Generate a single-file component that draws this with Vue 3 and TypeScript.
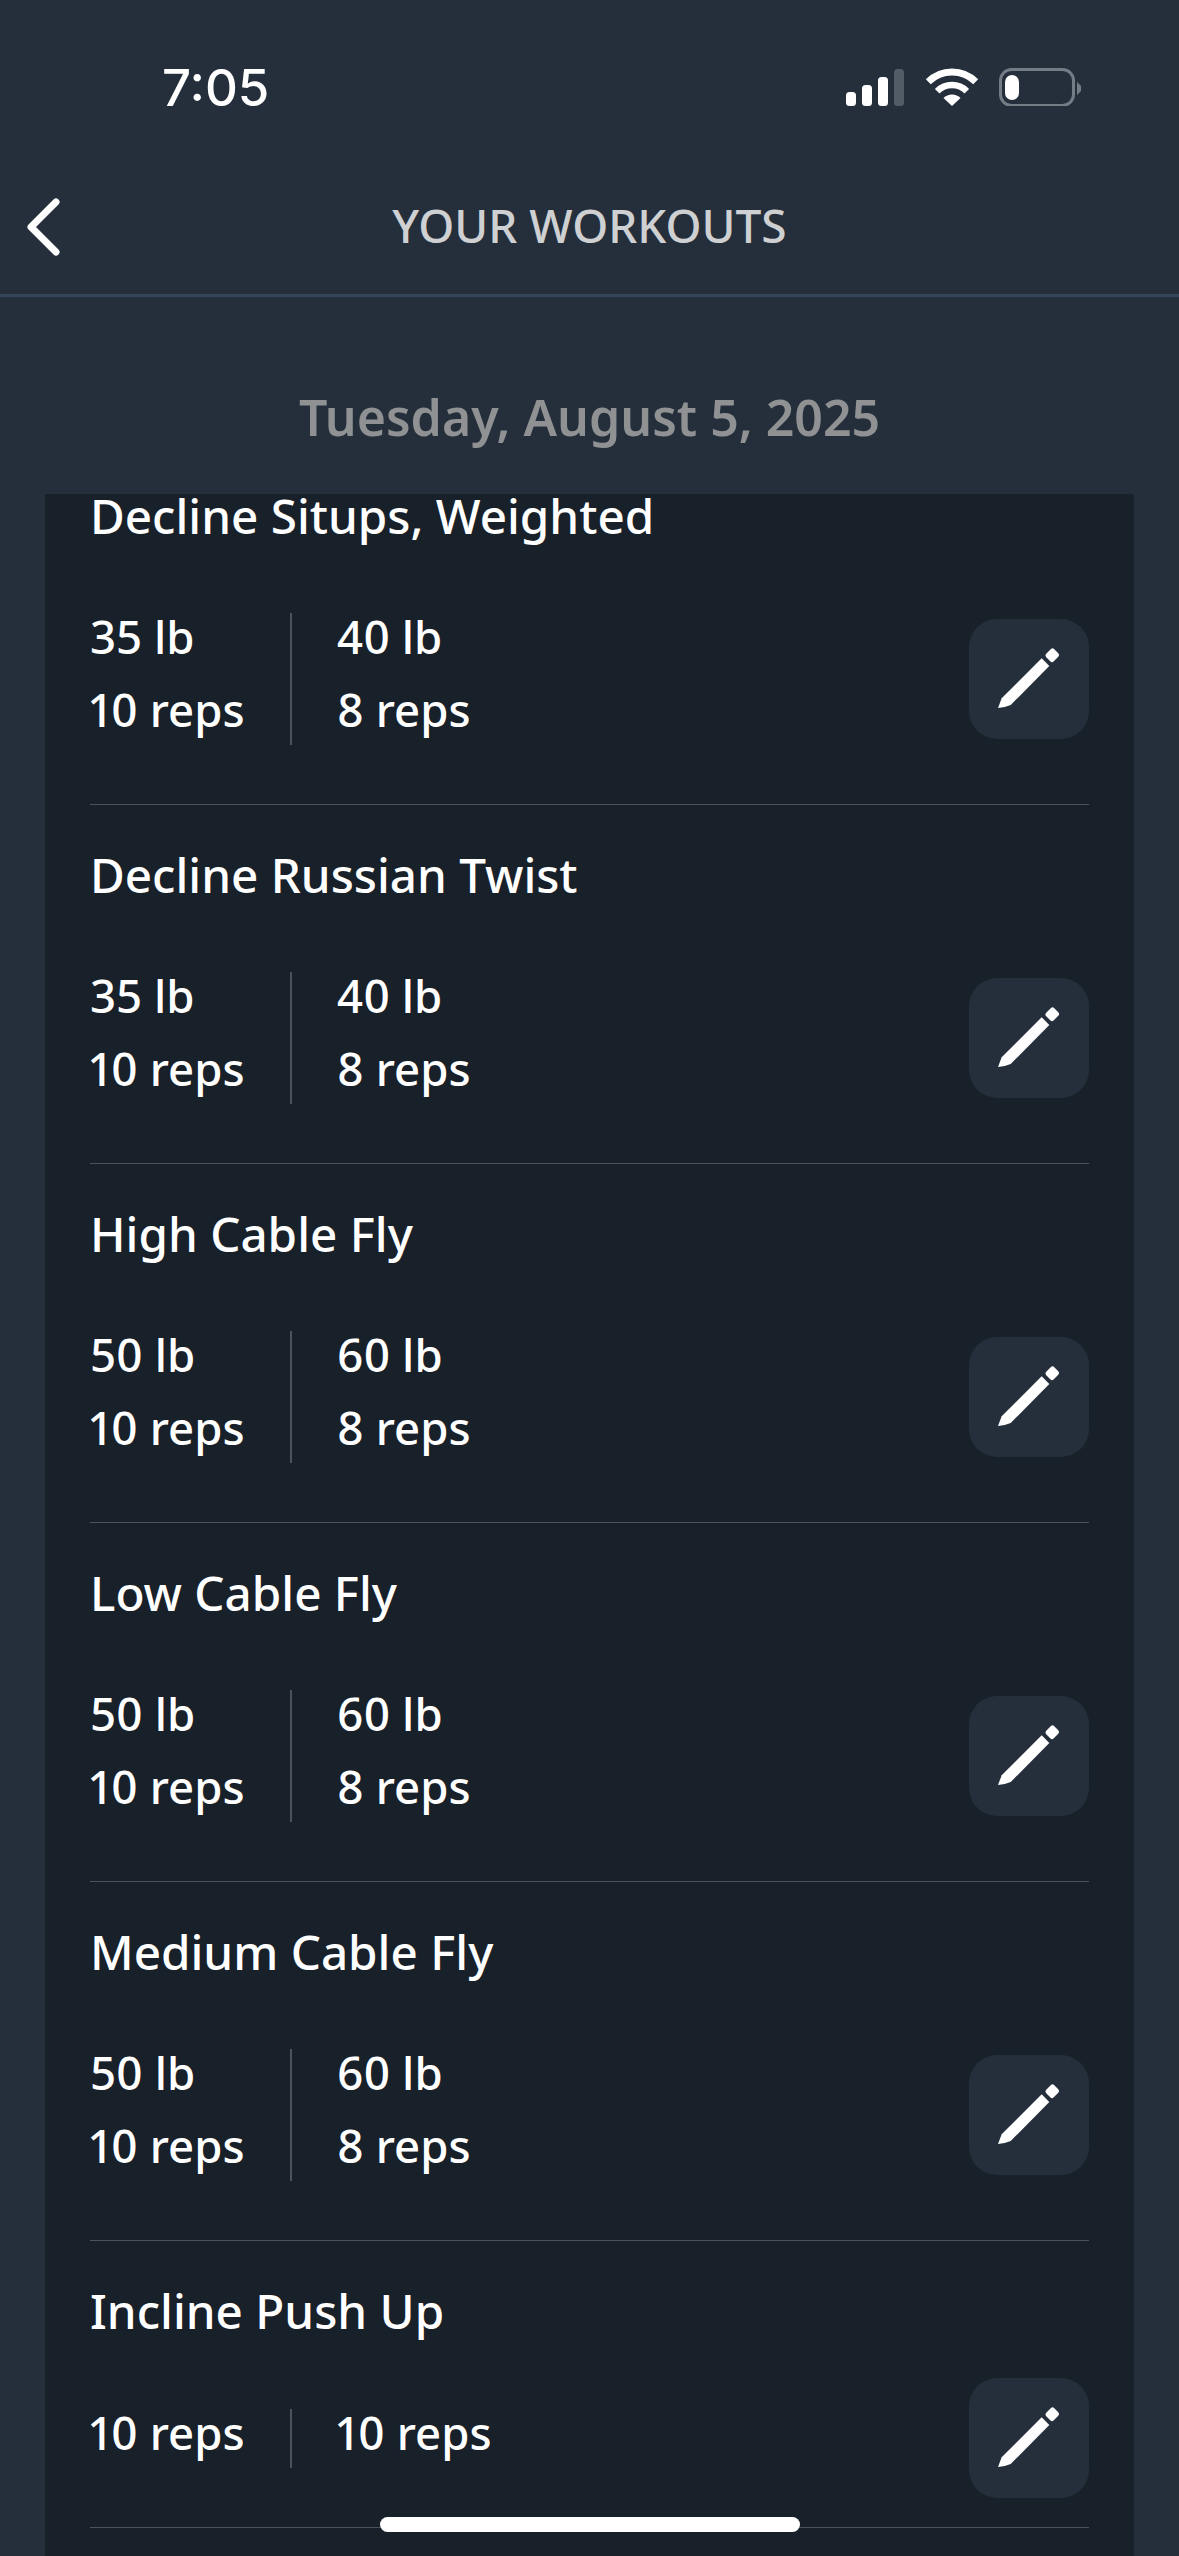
<script setup lang="ts">
interface SetData { lines: string[] }
interface Workout { name: string; sets: SetData[] }

const workouts: Workout[] = [
  { name: 'Decline Situps, Weighted', sets: [{ lines: ['35 lb', '10 reps'] }, { lines: ['40 lb', '8 reps'] }] },
  { name: 'Decline Russian Twist', sets: [{ lines: ['35 lb', '10 reps'] }, { lines: ['40 lb', '8 reps'] }] },
  { name: 'High Cable Fly', sets: [{ lines: ['50 lb', '10 reps'] }, { lines: ['60 lb', '8 reps'] }] },
  { name: 'Low Cable Fly', sets: [{ lines: ['50 lb', '10 reps'] }, { lines: ['60 lb', '8 reps'] }] },
  { name: 'Medium Cable Fly', sets: [{ lines: ['50 lb', '10 reps'] }, { lines: ['60 lb', '8 reps'] }] },
  { name: 'Incline Push Up', sets: [{ lines: ['10 reps'] }, { lines: ['10 reps'] }] },
]
</script>

<template>
  <div class="page">
    <header class="status">
      <span class="time">7:05</span>
      <svg class="indicators" width="235" height="38" viewBox="846 68 235 38" aria-hidden="true">
        <rect x="846" y="92" width="10" height="14" rx="3.5" fill="#fff" />
        <rect x="862" y="85" width="10" height="21" rx="3.5" fill="#fff" />
        <rect x="878" y="77" width="10" height="29" rx="3.5" fill="#fff" />
        <rect x="894" y="69" width="10" height="37" rx="3.5" fill="#525c66" />
        <path d="M928.3 81.7 A33.5 33.5 0 0 1 975.7 81.7" fill="none" stroke="#fff" stroke-width="7" />
        <path d="M937.2 91.2 A21 21 0 0 1 966.8 91.2" fill="none" stroke="#fff" stroke-width="6.5" />
        <path d="M952 106 L943.5 98 A12 12 0 0 1 960.5 98 Z" fill="#fff" />
        <rect x="1000.5" y="69.5" width="73" height="36" rx="11" fill="none" stroke="#747c86" stroke-width="3" />
        <rect x="1005" y="75" width="14" height="25" rx="7" fill="#fff" />
        <path d="M1077 82 L1081 86 Q1081.5 88.5 1081 91 L1077 95 Z" fill="#747c86" />
      </svg>
    </header>

    <nav class="nav">
      <svg class="back" width="36" height="60" viewBox="0 0 36 60" aria-hidden="true">
        <path d="M31 5 L6 30 L31 55" fill="none" stroke="#fff" stroke-width="7" stroke-linecap="round" stroke-linejoin="round" />
      </svg>
      <h1 class="nav-title">YOUR WORKOUTS</h1>
    </nav>

    <h2 class="date">Tuesday, August 5, 2025</h2>

    <main class="card">
      <section v-for="w in workouts" :key="w.name" class="row">
        <h3 class="name">{{ w.name }}</h3>
        <div class="body">
          <div class="sets">
            <div v-for="(s, i) in w.sets" :key="i" class="set">
              <div v-for="l in s.lines" :key="l" class="line">{{ l }}</div>
            </div>
          </div>
          <button class="edit" type="button" aria-label="Edit">
            <svg width="120" height="120" viewBox="0 0 120 120" aria-hidden="true">
              <path d="M29 89 L32.7 79.3 L72.7 39.3 L80.3 47 L41.7 86 Q36 88.5 29 89 Z" fill="#fff" />
              <path d="M79 36.5 L83.5 32 L87.5 36 L83 40.5 Z" fill="#fff" stroke="#fff" stroke-width="5" stroke-linejoin="round" />
            </svg>
          </button>
        </div>
      </section>
    </main>

    <div class="home-indicator"></div>
  </div>
</template>

<style>
html, body { margin: 0; background: #252f3b; }
</style>

<style scoped>
.page {
  position: relative;
  width: 1179px;
  height: 2556px;
  overflow: hidden;
  display: flex;
  flex-direction: column;
  background: #252f3b;
  color: #fff;
  font-family: "Noto Sans", "Open Sans", sans-serif;
}
.status {
  height: 176px;
  flex: none;
  box-sizing: border-box;
  padding: 0 98px 0 162px;
  display: flex;
  align-items: center;
  justify-content: space-between;
}
.indicators {
  margin-bottom: 2px;
}
.time {
  font-family: Inter, Roboto, sans-serif;
  font-size: 51px;
  font-weight: 500;
  line-height: 60px;
}
.nav {
  height: 118px;
  flex: none;
  border-bottom: 3px solid #36465a;
  display: grid;
  grid-template-columns: 1fr auto 1fr;
  align-items: start;
}
.back {
  margin: 21px 0 0 25px;
}
.nav-title {
  margin: 19px 0 0;
  font-size: 46px;
  font-weight: 500;
  line-height: 60px;
  color: #cfd0d2;
}
.date {
  flex: none;
  margin: 0;
  padding: 87px 0 44px;
  font-size: 50px;
  font-weight: 600;
  line-height: 66px;
  text-align: center;
  color: #8f9193;
}
.card {
  flex: 1;
  min-height: 0;
  margin: 0 45px;
  padding: 0 45px;
  overflow: hidden;
  background: #18202a;
}
.row {
  padding: 40px 0 29px;
  border-bottom: 1px solid #4c5259;
}
.row:first-child {
  margin-top: -48px;
}
.name {
  margin: 0;
  font-size: 47.6px;
  font-weight: 500;
  line-height: 60px;
}
.body {
  margin-top: 37px;
  display: flex;
  align-items: center;
  justify-content: space-between;
}
.sets {
  display: flex;
  padding: 30px 0;
}
.set {
  min-width: 200px;
  box-sizing: border-box;
  display: flex;
  flex-direction: column;
  gap: 14px;
}
.set + .set {
  border-left: 2px solid #4c5259;
  padding-left: 45px;
}
.line {
  font-size: 45.5px;
  font-weight: 500;
  line-height: 59px;
  font-variant-numeric: proportional-nums;
  margin: -6px 0 6px;
}
.edit {
  flex: none;
  width: 120px;
  height: 120px;
  padding: 0;
  border: 0;
  border-radius: 28px;
  background: #252f3b;
  display: block;
}
.edit svg {
  display: block;
}
.home-indicator {
  position: absolute;
  left: 380px;
  top: 2517px;
  width: 420px;
  height: 15px;
  border-radius: 8px;
  background: #fff;
}
</style>
